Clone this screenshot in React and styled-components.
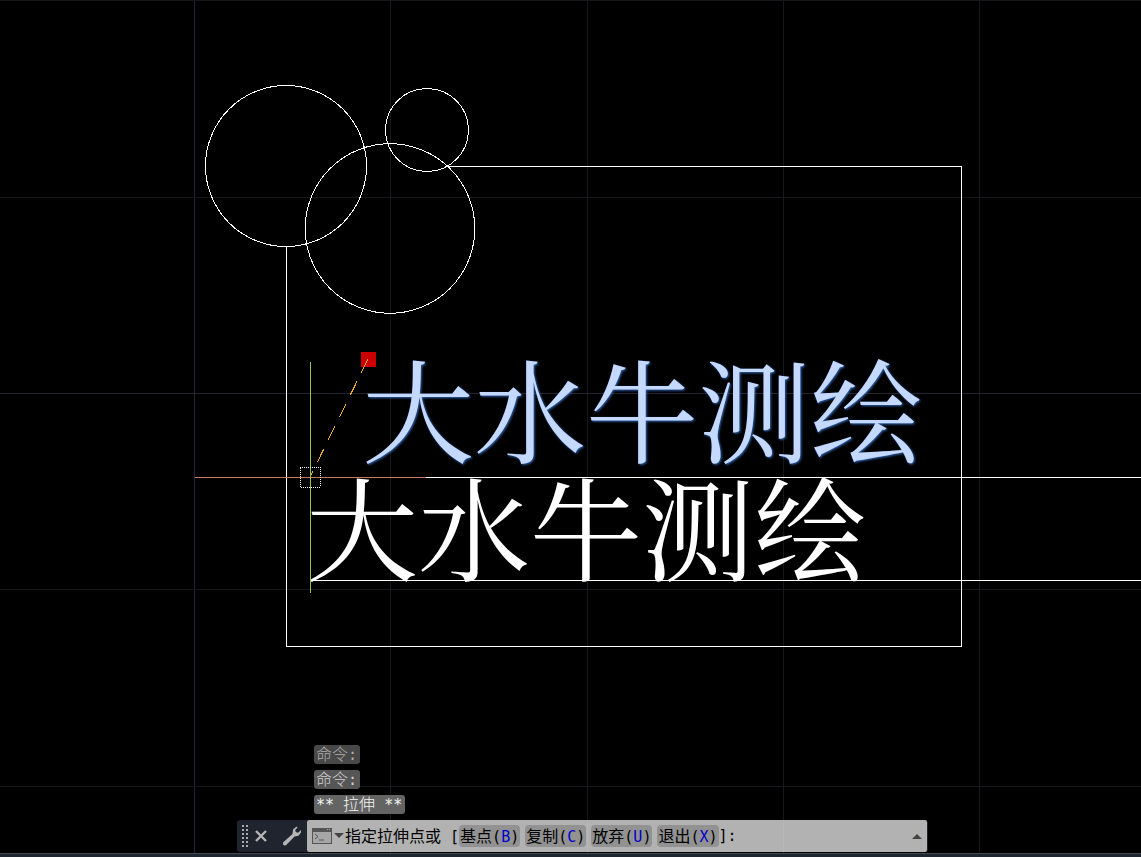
import React, { useState } from 'react'
import styled, { createGlobalStyle } from 'styled-components'

const gridX = [194, 390, 587, 783, 979]
const gridY = [0, 197, 393, 589, 786]

const circles = [
  { x: 286, y: 166, r: 80.5 },
  { x: 427, y: 130, r: 41.5 },
  { x: 390, y: 228.5, r: 84.8 },
]

const options = [
  { label: '基点', hotkey: 'B' },
  { label: '复制', hotkey: 'C' },
  { label: '放弃', hotkey: 'U' },
  { label: '退出', hotkey: 'X' },
]

const Drawing = () => (
  <DrawingSvg>
    {gridX.map((x) => (
      <GridLine key={x} $axis={x === 194} x1={x} x2={x} y1="0" y2="100%" />
    ))}
    {gridY.map((y) => (
      <GridLine key={y} $axis={y === 393} x1="0" x2="100%" y1={y} y2={y} />
    ))}
    {circles.map((c) => (
      <circle key={c.x} cx={c.x} cy={c.y} r={c.r} />
    ))}
    <path d="M286 247V646H961V166H447" />
    <line x1="426" x2="100%" y1="477" y2="477" />
    <line x1="311" x2="100%" y1="580" y2="580" />
    <Lettering $selected x="362" y="455">大水牛测绘</Lettering>
    <Lettering x="306" y="573">大水牛测绘</Lettering>

    {/* stretch grip with its rubber band and the cursor */}
    <rect x="361" y="352" width="15" height="15" fill="#cc0000" stroke="none" />
    <path d="M368 359L310 477" stroke="#f0b020" strokeDasharray="15 10" />
    <line x1="195" x2="426" y1="477" y2="477" stroke="#c87860" />
    <line x1="310" x2="310" y1="362" y2="593" stroke="#8fc65a" />
    <rect x="300" y="467" width="20" height="20" strokeDasharray="1 1" />
  </DrawingSvg>
)

const App = () => {
  const [value, setValue] = useState('')

  return (
    <Window>
      <GlobalStyle />
      <Workspace>
        <Drawing />
        <History>
          <Message $level={1}>命令<Mono>:</Mono></Message>
          <Message $level={2}>命令<Mono>:</Mono></Message>
          <Message $level={3}><Mono>** </Mono>拉伸<Mono> **</Mono></Message>
        </History>
        <CommandBar>
          <Tools>
            <Handle>
              <svg width="7" height="22" fill="#a8abae">
                {[0, 4, 8, 12, 16, 20].map((y) => (
                  <path key={y} d={`M0 ${y}h2v2h-2zM4 ${y}h2v2h-2z`} />
                ))}
              </svg>
            </Handle>
            <ToolButton aria-label="关闭">
              <svg width="12" height="12" stroke="#b5b5b5" strokeWidth="2.4">
                <path d="M1 1L11 11M11 1L1 11" />
              </svg>
            </ToolButton>
            <ToolButton aria-label="自定义">
              <svg width="20" height="20" fill="#b5b5b5">
                <path d="M14.500 0.500L11 3.500L10.500 8L1 16.500L1 18.500L2.500 19.500L4 19.200L12.500 10.500L16.500 9.800L19 6.500L19 4L16 6.800L13.700 6L13.300 4L15.500 1.500Z" />
              </svg>
            </ToolButton>
          </Tools>
          <Prompt>
            <RecentButton aria-label="最近使用的命令">
              <svg width="32" height="16">
                <path d="M0 0h20v16h-20z" fill="#555" />
                <path d="M1 4h18v11h-18z" fill="#a6a6a6" />
                <path d="M15 1h1v1h-1zM17 1h1v1h-1z" fill="#a6a6a6" />
                <path d="M3 6L6 8.500L3 11M7 12h5" fill="none" stroke="#555" />
                <path d="M22 5h10l-5 5z" fill="#444" />
              </svg>
            </RecentButton>
            <PromptLabel htmlFor="command">指定拉伸点或<Mono> [</Mono></PromptLabel>
            <Options>
              {options.map((o) => (
                <Option key={o.hotkey}>
                  {o.label}<Mono>(<b>{o.hotkey}</b>)</Mono>
                </Option>
              ))}
            </Options>
            <Mono>]:</Mono>
            <CommandInput id="command" value={value} onChange={(e) => setValue(e.target.value)} />
            <ExpandButton aria-label="展开">
              <svg width="10" height="5"><path d="M0 5L5 0L10 5z" fill="#444" /></svg>
            </ExpandButton>
          </Prompt>
        </CommandBar>
      </Workspace>
      <StatusEdge />
    </Window>
  )
}

export default App

const GlobalStyle = createGlobalStyle`
body{
  margin: 0;
  background-color: #000;
}
button, input{
  font: inherit;
  color: inherit;
  background: none;
  border: none;
  padding: 0;
}
`;

const Window = styled.div`
display: flex;
flex-direction: column;
min-height: 100vh;
overflow: hidden;
font-family: "Noto Sans CJK SC", sans-serif;
font-size: 16px;
line-height: 19px;
`;

const Workspace = styled.main`
position: relative;
flex: 1;
display: flex;
flex-direction: column;
justify-content: flex-end;
`;

const DrawingSvg = styled.svg`
position: absolute;
inset: 0;
width: 100%;
height: 100%;
fill: none;
stroke: #fff;
shape-rendering: crispEdges;
`;

const GridLine = styled.line`
stroke: ${({ $axis }) => ($axis ? '#242433' : '#17171b')};
`;

const Lettering = styled.text`
font-family: "Noto Serif CJK SC", "Noto Sans CJK SC", serif;
font-size: 112px;
stroke: none;
fill: ${({ $selected }) => ($selected ? '#c5d9ff' : '#fff')};
filter: ${({ $selected }) => ($selected ? 'drop-shadow(1px 1px 1px #2f66b8)' : 'none')};
`;

const History = styled.div`
position: relative;
display: flex;
flex-direction: column;
align-items: flex-start;
gap: 6px;
margin: 0 0 6px 314px;
font-weight: 300;
line-height: 17px;
`;

const Message = styled.div`
height: 19px;
padding: 0 3px 0 2px;
box-sizing: border-box;
border-radius: 3px;
white-space: pre;
color: ${({ $level }) => ['#b0b0b0', '#d2d2d2', '#f4f4f4'][$level - 1]};
background-color: ${({ $level }) => ['#484848', '#565656', '#646464'][$level - 1]};
`;

const Mono = styled.span`
font-family: "DejaVu Sans Mono", monospace;
font-size: 15px;
line-height: 1;
white-space: pre;
`;

const CommandBar = styled.div`
position: relative;
display: flex;
height: 32px;
margin: 0 213px 1px 237px;
border-right: 1px solid #20242e;
border-radius: 3px;
`;

const Tools = styled.div`
display: flex;
align-items: center;
gap: 15px;
width: 70px;
background-color: #20242e;
border-radius: 3px 0 0 3px;
`;

const Handle = styled.div`
display: flex;
margin: 0 -9px 0 5px;
`;

const ToolButton = styled.button`
display: flex;
`;

const Prompt = styled.div`
flex: 1;
display: flex;
align-items: center;
min-width: 0;
padding: 0 5px;
color: #000;
white-space: pre;
background-color: rgba(237, 237, 237, 0.75);
border-radius: 2px;
`;

const PromptLabel = styled.label`
padding-bottom: 2px;
`;

const RecentButton = styled.button`
display: flex;
margin-right: 1px;
`;

const Options = styled.div`
display: flex;
gap: 5px;
`;

const Option = styled.button`
height: 22px;
padding: 0 1px 2px;
border-radius: 4px;
background-color: #929292;
b{
  font-weight: normal;
  color: #0000c8;
}
`;

const CommandInput = styled.input`
flex: 1;
min-width: 0;
outline: none;
`;

const ExpandButton = styled.button`
display: flex;
`;

const StatusEdge = styled.footer`
height: 3px;
border-top: 1px solid #444954;
background-color: #20262f;
`;
